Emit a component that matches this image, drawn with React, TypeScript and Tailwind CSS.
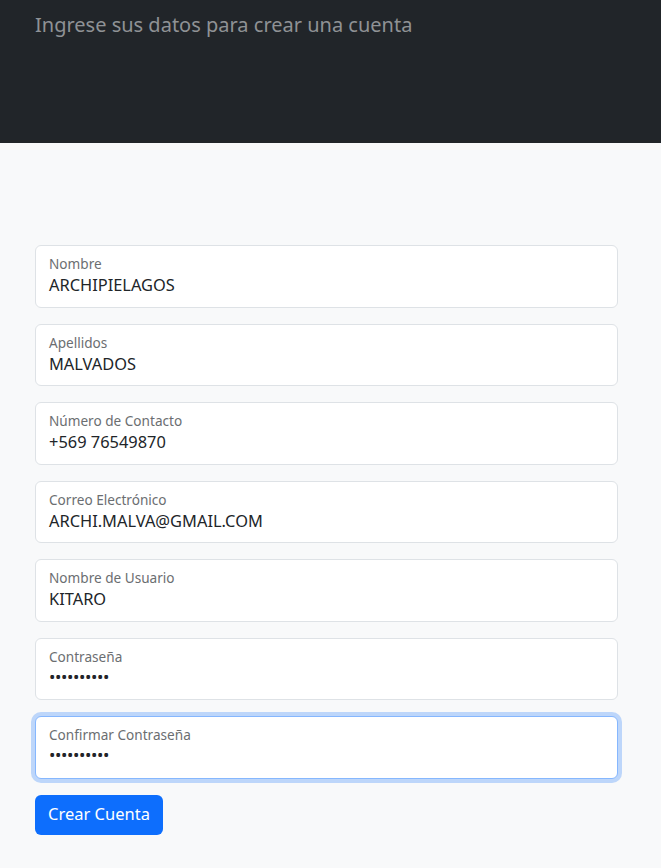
import React from "react";

const fields = [
  { label: "Nombre", value: "ARCHIPIELAGOS" },
  { label: "Apellidos", value: "MALVADOS" },
  { label: "Número de Contacto", value: "+569 76549870" },
  { label: "Correo Electrónico", value: "ARCHI.MALVA@GMAIL.COM" },
  { label: "Nombre de Usuario", value: "KITARO" },
  { label: "Contraseña", value: "••••••••••", password: true },
  { label: "Confirmar Contraseña", value: "••••••••••", password: true, focused: true },
];

const FloatingField = ({
  label,
  value,
  password,
  focused,
}: {
  label: string;
  value: string;
  password?: boolean;
  focused?: boolean;
}) => (
  <div
    className={`h-[62.5px] rounded-[6px] border bg-white pl-[13px] pt-[9px] ${
      focused
        ? "border-[#86b7fe] shadow-[0_0_0_4px_rgba(13,110,253,0.25)]"
        : "border-[#dee2e6]"
    }`}
  >
    <div className="text-[13.6px] leading-[18px] text-[#6b6e71]">{label}</div>
    {password ? (
      <div className="mt-[1px] text-[17px] leading-[20px] tracking-[-0.4px] text-[#212529]">
        {value}
      </div>
    ) : (
      <div className="mt-[2px] text-[16.4px] leading-[20px] text-[#212529]">{value}</div>
    )}
  </div>
);

export default function App() {
  return (
    <div className="min-h-[868px] bg-[#f8f9fa] font-['Noto_Sans',sans-serif]">
      <header className="h-[143px] bg-[#212529] px-[35px] pt-[10px]">
        <p className="text-[20px] leading-[30px] text-[#8f9295]">
          Ingrese sus datos para crear una cuenta
        </p>
      </header>
      <main className="px-[35px] pt-[102px] pr-[43px]">
        <form className="flex flex-col gap-4">
          {fields.map((f) => (
            <FloatingField key={f.label} {...f} />
          ))}
          <div>
            <button
              type="button"
              className="h-[40px] rounded-[6px] bg-[#0d6efd] px-[13px] text-[16.5px] text-white"
            >
              Crear Cuenta
            </button>
          </div>
        </form>
      </main>
    </div>
  );
}
